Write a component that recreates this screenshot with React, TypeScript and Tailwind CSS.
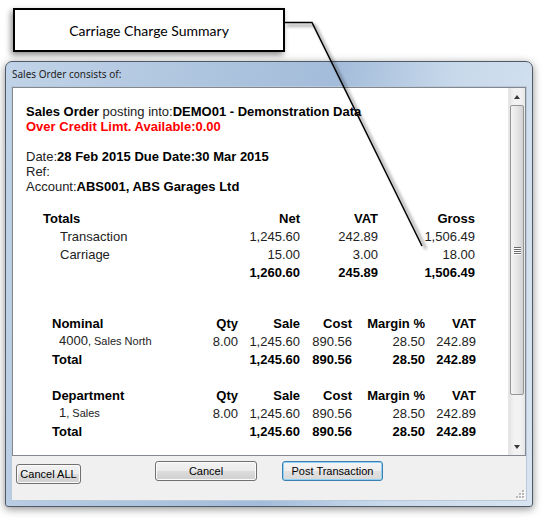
import React from 'react'

// ─── Data ─────────────────────────────────────────────────────────────────────
const TOTALS = [
  { label: 'Transaction', net: '1,245.60', vat: '242.89', gross: '1,506.49' },
  { label: 'Carriage', net: '15.00', vat: '3.00', gross: '18.00' },
]

const BREAKDOWNS = [
  {
    title: 'Nominal',
    code: '4000',
    name: ', Sales North',
    qty: '8.00',
    sale: '1,245.60',
    cost: '890.56',
    margin: '28.50',
    vat: '242.89',
  },
  {
    title: 'Department',
    code: '1',
    name: ', Sales',
    qty: '8.00',
    sale: '1,245.60',
    cost: '890.56',
    margin: '28.50',
    vat: '242.89',
  },
]

// ─── Win7 style push button ───────────────────────────────────────────────────
function WinButton({
  label,
  className,
  isDefault,
}: {
  label: string
  className: string
  isDefault?: boolean
}) {
  return (
    <button
      className={
        'rounded-[3px] border text-[11px] text-black font-[Liberation_Sans,Arial,sans-serif] ' +
        (isDefault
          ? 'border-[#3c7fb1] bg-[linear-gradient(#f4f4f4_0%,#eeeeee_50%,#e2e2e2_50%,#d8d8d8_100%)] shadow-[inset_0_0_0_1px_#8fd0f3] '
          : 'border-[#707070] bg-[linear-gradient(#f2f2f2_0%,#ebebeb_50%,#dddddd_50%,#cfcfcf_100%)] shadow-[inset_0_0_0_1px_#fcfcfc] ') +
        className
      }
    >
      {label}
    </button>
  )
}

// ─── Vertical scrollbar ───────────────────────────────────────────────────────
function ScrollBar() {
  return (
    <div className="w-[17px] flex flex-col items-center bg-[linear-gradient(90deg,#e3e3e3,#f2f2f2_30%,#f2f2f2_70%,#e8e8e8)] border-l border-[#e6e6e6]">
      <div className="h-[17px] flex items-center justify-center">
        <div className="w-0 h-0 border-l-[3.5px] border-r-[3.5px] border-b-[4px] border-l-transparent border-r-transparent border-b-[#3a3a3a]" />
      </div>
      <div className="flex-1 w-full px-[1px]">
        <div className="h-[290px] rounded-[2px] border border-[#959595] bg-[linear-gradient(90deg,#f4f4f4,#e6e6e6_50%,#d2d2d2)] flex flex-col items-center justify-center gap-[1px]">
          {[0, 1, 2, 3].map((i) => (
            <div key={i} className="w-[7px] h-[1px] bg-[#6a6a6a] shadow-[0_1px_0_#fff]" />
          ))}
        </div>
      </div>
      <div className="h-[17px] flex items-center justify-center">
        <div className="w-0 h-0 border-l-[3.5px] border-r-[3.5px] border-t-[4px] border-l-transparent border-r-transparent border-t-[#3a3a3a]" />
      </div>
    </div>
  )
}

// ─── Page ─────────────────────────────────────────────────────────────────────
export default function App() {
  return (
    <div className="relative w-[547px] h-[520px] bg-white overflow-hidden font-['Liberation_Sans',Arial,sans-serif]">
      {/* Callout label */}
      <div className="pt-[8px] pl-[13px]">
        <div className="w-[272px] h-[44px] border-2 border-black bg-white shadow-[-2px_3px_6px_rgba(0,0,0,0.45)] flex items-center justify-center font-['Lato',sans-serif] text-[14px] text-black">
          Carriage Charge Summary
        </div>
      </div>

      {/* Dialog window */}
      <div className="ml-[5px] mt-[9px] w-[528px] h-[446px] rounded-t-[7px] rounded-b-[3px] border border-[#4f5a66] bg-[linear-gradient(100deg,#c0d3e8_0%,#adc4de_35%,#a3bcda_55%,#c8d9eb_75%,#d8e4f0_100%)] shadow-[0_2px_8px_rgba(0,0,0,0.45)] flex flex-col px-[5px] pb-[5px]">
        <div className="h-[24px] flex items-center pl-[1px] text-[10px] text-[#1e1e1e] font-['Noto_Sans',sans-serif]">
          Sales Order consists of:
        </div>

        <div className="flex-1 flex flex-col bg-[#f0f0f0] border border-[#b9c9da]">
          {/* Summary panel */}
          <div className="h-[369px] flex bg-white border border-[#828790]">
            <div className="flex-1 pl-[13px] pt-[16px] text-[13px] leading-[15px] text-[#222]">
              <p>
                <b className="text-black">Sales Order</b> posting into:
                <b className="text-black">DEMO01 - Demonstration Data</b>
              </p>
              <p className="font-bold text-[#ff0000]">Over Credit Limt. Available:0.00</p>
              <p>&nbsp;</p>
              <p>
                Date:<b className="text-black">28 Feb 2015 Due Date:30 Mar 2015</b>
              </p>
              <p>Ref:</p>
              <p>
                Account:<b className="text-black">ABS001, ABS Garages Ltd</b>
              </p>

              {/* Totals */}
              <div className="mt-[15px] ml-[17px] grid grid-cols-[177px_80px_78px_97px] auto-rows-[18px] items-center">
                <span className="font-bold text-black">Totals</span>
                <span className="text-right font-bold text-black">Net</span>
                <span className="text-right font-bold text-black">VAT</span>
                <span className="text-right font-bold text-black">Gross</span>
                {TOTALS.map((row) => (
                  <React.Fragment key={row.label}>
                    <span className="pl-[17px]">{row.label}</span>
                    <span className="text-right">{row.net}</span>
                    <span className="text-right">{row.vat}</span>
                    <span className="text-right">{row.gross}</span>
                  </React.Fragment>
                ))}
                <span />
                <span className="text-right font-bold text-black">1,260.60</span>
                <span className="text-right font-bold text-black">245.89</span>
                <span className="text-right font-bold text-black">1,506.49</span>
              </div>

              {/* Nominal / Department */}
              {BREAKDOWNS.map((b, i) => (
                <div
                  key={b.title}
                  className={
                    'ml-[26px] grid grid-cols-[136px_50px_62px_52px_73px_51px] auto-rows-[18px] items-center ' +
                    (i === 0 ? 'mt-[33px]' : 'mt-[18px]')
                  }
                >
                  <span className="font-bold text-black">{b.title}</span>
                  <span className="text-right font-bold text-black">Qty</span>
                  <span className="text-right font-bold text-black">Sale</span>
                  <span className="text-right font-bold text-black">Cost</span>
                  <span className="text-right font-bold text-black">Margin %</span>
                  <span className="text-right font-bold text-black">VAT</span>

                  <span className="pl-[7px] whitespace-nowrap">
                    {b.code}
                    <span className="text-[11px]">{b.name}</span>
                  </span>
                  <span className="text-right">{b.qty}</span>
                  <span className="text-right">{b.sale}</span>
                  <span className="text-right">{b.cost}</span>
                  <span className="text-right">{b.margin}</span>
                  <span className="text-right">{b.vat}</span>

                  <span className="font-bold text-black">Total</span>
                  <span />
                  <span className="text-right font-bold text-black">{b.sale}</span>
                  <span className="text-right font-bold text-black">{b.cost}</span>
                  <span className="text-right font-bold text-black">{b.margin}</span>
                  <span className="text-right font-bold text-black">{b.vat}</span>
                </div>
              ))}
            </div>
            <ScrollBar />
          </div>

          {/* Buttons */}
          <div className="relative flex-1 flex items-start pl-[4px] pt-[5px]">
            <WinButton label="Cancel ALL" className="mt-[3px] w-[65px] h-[20px]" />
            <WinButton label="Cancel" className="ml-[74px] w-[102px] h-[20px]" />
            <WinButton label="Post Transaction" className="ml-[25px] w-[101px] h-[20px]" isDefault />

            {/* Size grip */}
            <svg className="absolute right-[1px] bottom-[1px]" width="10" height="10" viewBox="0 0 10 10">
              {[
                [7, 1],
                [4, 4],
                [7, 4],
                [1, 7],
                [4, 7],
                [7, 7],
              ].map(([x, y]) => (
                <g key={`${x}-${y}`}>
                  <rect x={x + 1} y={y + 1} width="2" height="2" fill="#fff" />
                  <rect x={x} y={y} width="2" height="2" fill="#b8b8b8" />
                </g>
              ))}
            </svg>
          </div>
        </div>
      </div>

      {/* Callout leader line */}
      <svg className="absolute inset-0 pointer-events-none" width="547" height="520" viewBox="0 0 547 520">
        <defs>
          <filter id="leader-shadow" x="-20%" y="-20%" width="140%" height="140%">
            <feGaussianBlur stdDeviation="1.5" />
          </filter>
        </defs>
        <path
          d="M287 25.5 H315 L426 249"
          fill="none"
          stroke="#000"
          strokeOpacity="0.35"
          strokeWidth="2.5"
          filter="url(#leader-shadow)"
        />
        <path d="M285 22.5 H312 L422 246" fill="none" stroke="#000" strokeWidth="1.5" />
      </svg>
    </div>
  )
}
